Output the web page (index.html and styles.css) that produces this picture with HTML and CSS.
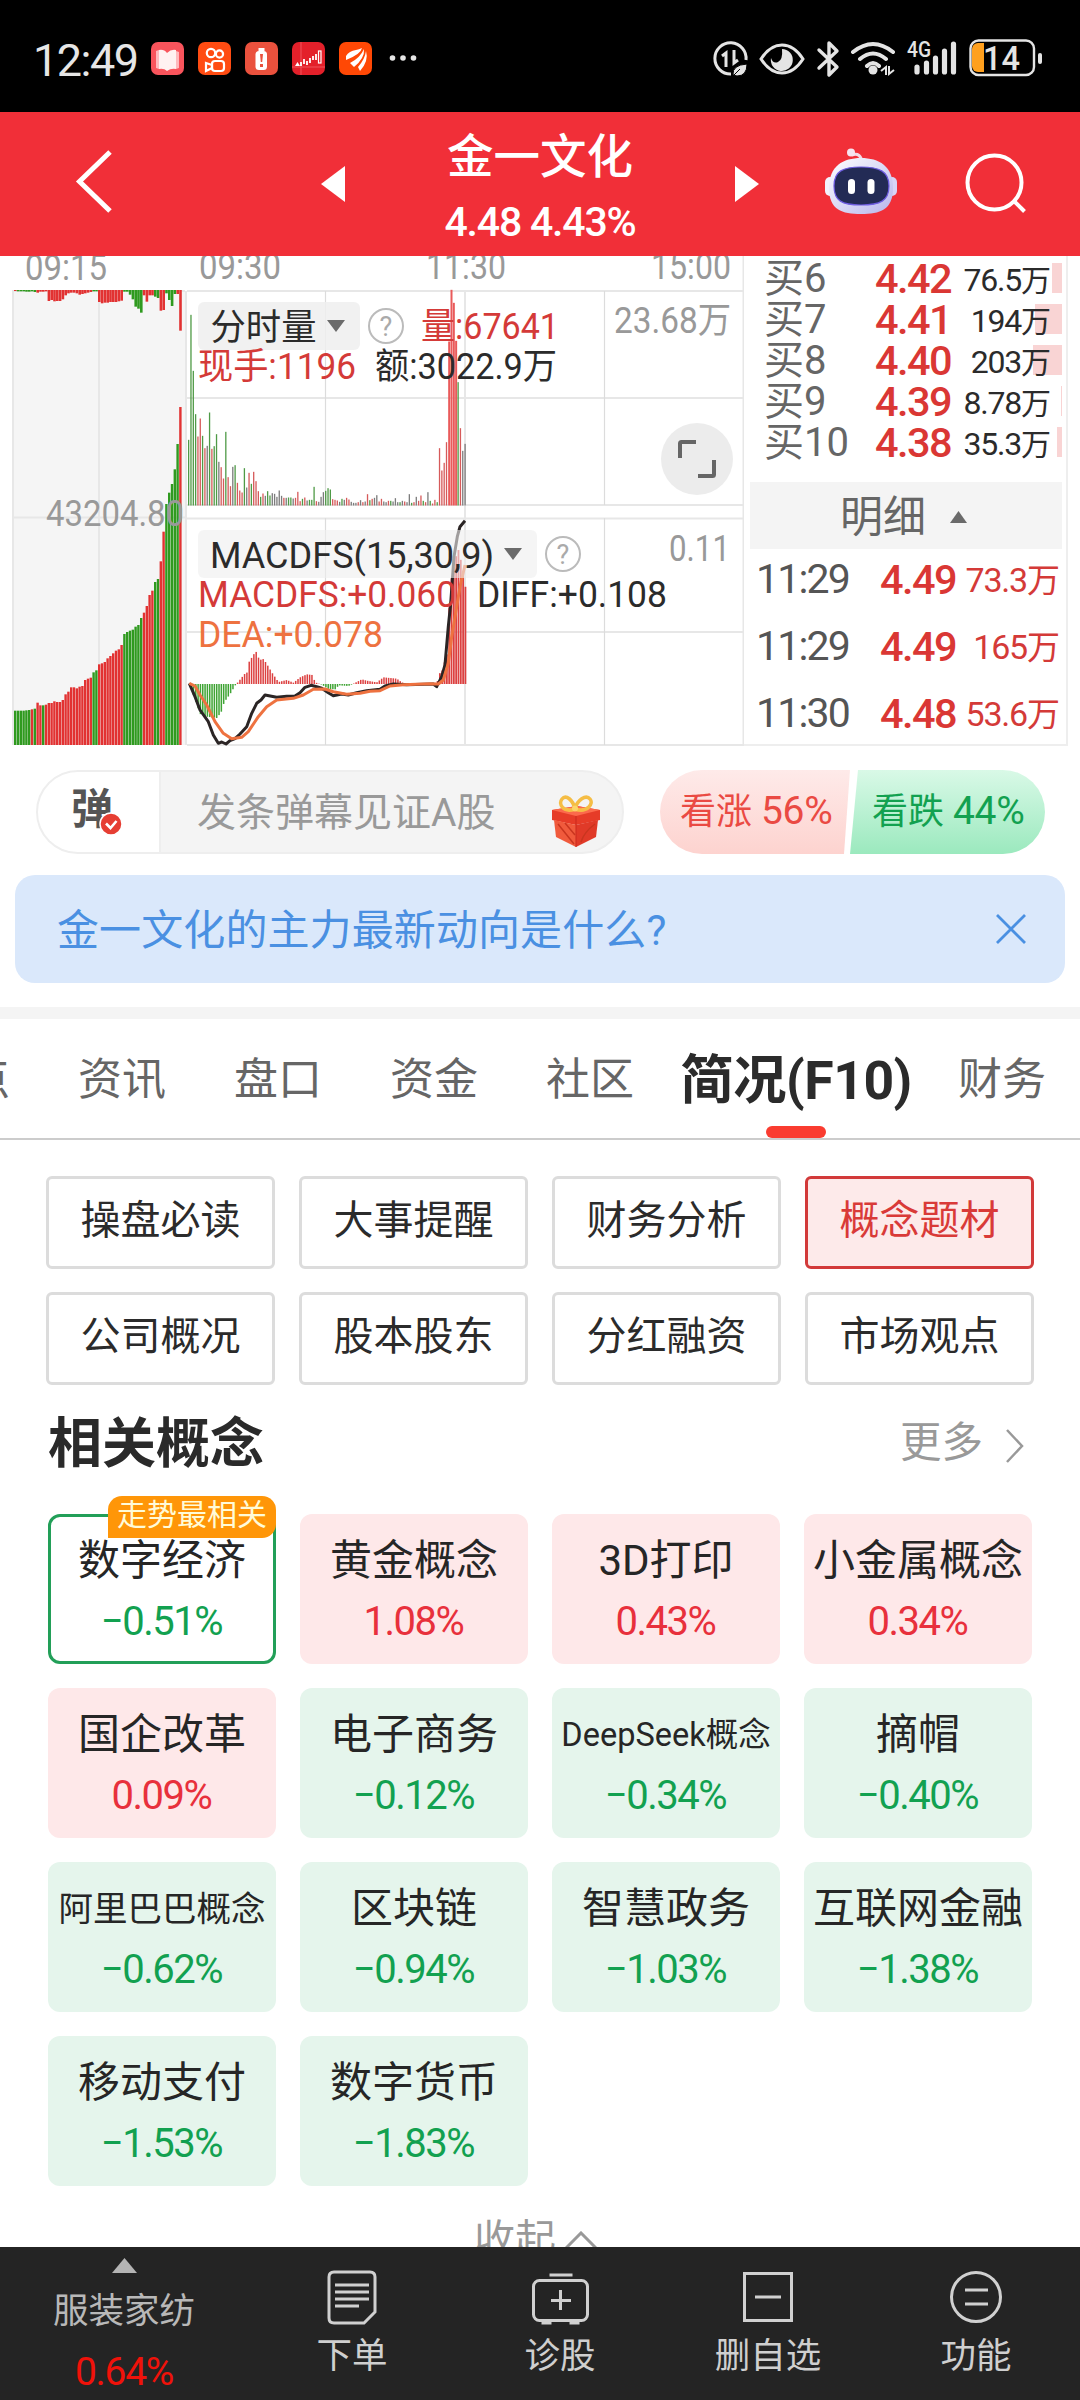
FILE: index.html
```html
<!DOCTYPE html>
<html lang="zh-CN">
<head>
<meta charset="utf-8">
<title>金一文化</title>
<link rel="stylesheet" href="styles.css">
</head>
<body>
<div class="screen">
  <div class="status">
    <span class="clock">12:49</span>
    <svg class="apps" width="270" height="34" viewBox="150 41 270 34">
      <rect x="151" y="42" width="33" height="33" rx="7" fill="#f9545c"/>
      <path d="M156 51l3-1v19l-3-1zM176 51l3 1v16l-3 1z" fill="#ffb9bd"/>
      <path d="M159 50q5-1 8 3q4-4 9-3v19q-5-1-9 2q-3-3-8-2z" fill="#fff1f1"/>
      <rect x="198" y="42" width="33" height="33" rx="7" fill="#ff4c12"/>
      <g fill="none" stroke="#fff" stroke-width="2.2"><circle cx="211" cy="53" r="4.2"/><circle cx="219.500" cy="54" r="3.600"/><rect x="212" y="61" width="12" height="10" rx="3"/><path d="M206 63l6 2v3l-6 3z"/></g>
      <rect x="245" y="42" width="33" height="33" rx="7" fill="#ea513d"/>
      <rect x="258.500" y="48" width="6" height="3" fill="#fff"/><rect x="255.500" y="51" width="11.500" height="19" rx="3.500" fill="#fff"/><path d="M260 54h3l-.8 8h-1.400zM260 64h3v3h-3z" fill="#ea513d"/>
      <rect x="292" y="42" width="33" height="33" rx="7" fill="#e3202a"/>
      <path d="M301 42v33M292 67h33" stroke="#f0525a" stroke-width="1"/>
      <path d="M295 66l2.500-4 2.500 4z" fill="#fff"/><path d="M301 62v4M304 59v5M307 61v4M310 58v5M313 56v4M316 54v6" stroke="#fff" stroke-width="1.800"/><rect x="318.500" y="51" width="2.500" height="12" fill="none" stroke="#fff" stroke-width="1.200"/>
      <rect x="339" y="42" width="33" height="33" rx="7" fill="#ff4805"/>
      <path d="M346 56q3-5 10-6 3-.5 6-2-1 6-16 12z" fill="#fff"/><path d="M350 63q10-5 14-14 1 9-10 18z" fill="#fff"/><path d="M358 67q7-8 8-16 3 10-6 20z" fill="#fff"/>
      <g fill="#e6e6e6"><circle cx="392.500" cy="58" r="2.800"/><circle cx="403" cy="58" r="2.800"/><circle cx="413.500" cy="58" r="2.800"/></g>
    </svg>
    <svg class="sys" width="334" height="40" viewBox="711 38 334 40" fill="none" stroke="#e4e4e4">
      <path d="M746 60A15.600 15.600 0 1 0 731 74" stroke-width="3"/>
      <path d="M722 56l4-3v14M734 50v13l4-3" stroke-width="3"/>
      <path d="M733 75q-1-10 14-11q0 12-10 12zM732 77l8-8" fill="#e4e4e4" stroke="#000" stroke-width="1"/>
      <path d="M761 59q9-14 21-14t21 14q-9 14-21 14t-21-14z" stroke-width="3"/>
      <path d="M782 49a11 11 0 1 1-11 9q2 6 7 4t4-13z" fill="#e4e4e4" stroke="none"/>
      <path d="M819 50l18 17-8 8V43l8 8-18 17" stroke-width="3.400" stroke-linejoin="round" stroke-linecap="round"/>
      <path d="M853 52q20-16 40 0M860 59q13-11 26 0M867 66q6-6 12 0" stroke-width="4" stroke-linecap="round"/>
      <circle cx="873" cy="70" r="4.500" fill="#e4e4e4" stroke="none"/>
      <path d="M881 71l5-4v8M889 66v8l5-4" stroke-width="2"/>
      <path d="M917 67v5M926.500 63v9M935.500 58v14M944.500 51v21M953.500 44v28" stroke-width="5.200" stroke-linecap="round"/>
      <text x="907" y="57" font-size="22" font-weight="500" fill="#e4e4e4" stroke="none" textLength="24" lengthAdjust="spacingAndGlyphs">4G</text>
      <path d="M984 43h-6a6 6 0 0 0-6 6v17a6 6 0 0 0 6 6h6z" fill="#ffa01e" stroke="none"/>
      <rect x="970.500" y="40.500" width="63.500" height="34.500" rx="8" stroke-width="2.400"/>
      <path d="M1040 55v7" stroke-width="4" stroke-linecap="round"/>
      <text x="983" y="69.500" font-size="33" font-weight="500" fill="#e4e4e4" stroke="none" textLength="37" lengthAdjust="spacingAndGlyphs">14</text>
    </svg>
  </div>

  <header class="header">
    <svg class="back" width="40" height="68" viewBox="74 147 40 68"><path d="M110 152L79.500 181.500 110 211" fill="none" stroke="#fff" stroke-width="5"/></svg>
    <svg class="prev" width="24" height="36" viewBox="0 0 24 36"><path d="M24 0v36L0 18z" fill="#fff"/></svg>
    <div class="stock"><div class="stock-name">金一文化</div><div class="stock-price">4.48 4.43%</div></div>
    <svg class="next" width="24" height="36" viewBox="0 0 24 36"><path d="M0 0v36l24-18z" fill="#fff"/></svg>
    <svg class="robot" width="74" height="70" viewBox="824 147 74 70">
      <defs><linearGradient id="shell" x1="0" y1="0" x2="1" y2="1"><stop offset="0" stop-color="#fff"/><stop offset="1" stop-color="#b7b5ec"/></linearGradient></defs>
      <path d="M852 155q9-3 10 8" fill="none" stroke="#f3dbe6" stroke-width="3"/><circle cx="851" cy="152.500" r="4" fill="#f6e4f0"/>
      <rect x="825" y="177" width="10" height="19" rx="5" fill="#f3f2fc"/><rect x="887" y="177" width="10" height="19" rx="5" fill="#d8d4f6"/>
      <path d="M829 188C829 166 843 158 861 158s32 8 32 30-13 26-32 26-32-4-32-26z" fill="url(#shell)"/>
      <path d="M834 186c0-15 9-19 27-19s28 4 28 19-9 19-28 19-27-4-27-19z" fill="#232b55" stroke="#6d5be0" stroke-width="1.200"/>
      <rect x="848" y="179" width="7" height="15" rx="3.500" fill="#fff"/><rect x="867.500" y="179" width="7" height="15" rx="3.500" fill="#fff"/>
    </svg>
    <svg class="search" width="62" height="62" viewBox="964 152 62 62" fill="none" stroke="#fff" stroke-width="4"><circle cx="994.500" cy="182.500" r="27"/><path d="M1013.500 200.500l11 11"/></svg>
  </header>

  <main class="content">
    <section class="quote">
      <svg class="chart" id="chart" width="744" height="494" viewBox="0 256 744 494">
        <rect x="12" y="290" width="173" height="455" fill="#f5f5f5"/>
        <g stroke="#e7e7e7" fill="none" stroke-width="2">
          <path d="M13 290v455M12 291h173M99 291v454M12 517.500h173M186 291v454" />
          <path d="M187 291H744M187 398H744M187 505H744M187 518.500H744M187 632H744M187 745H744M465 291v454M743.500 256V746"/>
          <path d="M325.500 291v214M325.500 518v227M604.500 291v214M604.500 518v227" stroke-width="1.200" stroke="#dcdcdc"/>
        </g>
        <g id="auction"></g>
        <g id="volume"></g>
        <g id="macd"></g>
        <polyline id="diff" fill="none" stroke="#2b2525" stroke-width="3" stroke-linejoin="round"/>
        <polyline id="dea" fill="none" stroke="#ee7240" stroke-width="3" stroke-linejoin="round"/>
        <rect x="198" y="302" width="162" height="48" rx="6" fill="#efefef" fill-opacity=".85"/>
        <rect x="198" y="530" width="339" height="48" rx="6" fill="#efefef" fill-opacity=".6"/>
        <path d="M327 320h18l-9 12zM504 548h18l-9 12z" fill="#6b6b6b"/>
        <g fill="none" stroke="#bbb" stroke-width="2"><circle cx="386" cy="326" r="17"/><circle cx="563" cy="554" r="17"/></g>
        <g font-size="27" fill="#aaa" text-anchor="middle"><text x="386" y="335.500">?</text><text x="563" y="563.500">?</text></g>
        <g class="axis">
          <text x="25" y="279.500" textLength="82">09:15</text><text x="199" y="279" textLength="82">09:30</text>
          <text x="426" y="279" textLength="80">11:30</text><text x="651" y="279" textLength="80">15:00</text>
          <text x="46" y="526" textLength="138">43204.80</text><text x="614" y="333" textLength="117">23.68万</text><text x="669" y="561" textLength="61">0.11</text>
        </g>
        <g class="ind">
          <text x="210.500" y="340" textLength="106">分时量</text>
          <text x="421" y="339" textLength="138" class="red">量:67641</text>
          <text x="198" y="379" textLength="158" class="red">现手:1196</text>
          <text x="375" y="379" textLength="182">额:3022.9万</text>
          <text x="210" y="568" textLength="284">MACDFS(15,30,9)</text>
          <text x="198" y="607" textLength="258" class="red">MACDFS:+0.060</text>
          <text x="477" y="607" textLength="190">DIFF:+0.108</text>
          <text x="198" y="647" textLength="185" class="orange">DEA:+0.078</text>
        </g>
        <circle cx="697" cy="459" r="36" fill="#ececec"/>
        <path d="M680 458v-14.500q0-1.500 1.500-1.500H696M714 460v14.500q0 1.500-1.500 1.500H698" fill="none" stroke="#666" stroke-width="4"/>
      </svg>
      <aside class="book">
        <div class="bids">
          <div class="bid"><span class="lv">买6</span><span class="px">4.42</span><span class="qty">76.5<i>万</i></span><b style="width:10px"></b></div>
          <div class="bid"><span class="lv">买7</span><span class="px">4.41</span><span class="qty">194<i>万</i></span><b style="width:27px"></b></div>
          <div class="bid"><span class="lv">买8</span><span class="px">4.40</span><span class="qty">203<i>万</i></span><b style="width:29px"></b></div>
          <div class="bid"><span class="lv">买9</span><span class="px">4.39</span><span class="qty">8.78<i>万</i></span><b style="width:1px"></b></div>
          <div class="bid"><span class="lv">买10</span><span class="px">4.38</span><span class="qty">35.3<i>万</i></span><b style="width:5px"></b></div>
        </div>
        <div class="detail">明细<svg width="17" height="12" viewBox="0 0 17 12"><path d="M0 12h17L8.500 0z" fill="#6a6a6a"/></svg></div>
        <div class="trade"><span>11:29</span><span class="px">4.49</span><span class="tq">73.3<i>万</i></span></div>
        <div class="trade"><span>11:29</span><span class="px">4.49</span><span class="tq">165<i>万</i></span></div>
        <div class="trade"><span>11:30</span><span class="px">4.48</span><span class="tq">53.6<i>万</i></span></div>
      </aside>
    </section>

    <section class="social">
      <div class="danmu">
        <div class="danmu-on">弹<svg class="tick" width="24" height="24" viewBox="0 0 24 24"><circle cx="12" cy="12" r="11" fill="#e63e33" stroke="#fff" stroke-width="1.500"/><path d="M7 11.500l4.500 4.500 6-7" fill="none" stroke="#fff" stroke-width="2.600"/></svg></div>
        <div class="danmu-input">发条弹幕见证A股</div>
        <svg class="gift" width="50" height="54" viewBox="0 0 50 54">
          <path d="M1 16l25-4 23 4v10l-24 5L1 26z" fill="#e63c28"/><path d="M1 16l24 6 24-6-23-4z" fill="#fb6a4c"/>
          <path d="M3 26l22 5v22L5 43z" fill="#f05a3c"/><path d="M25 31l22-5-2 17-20 10z" fill="#e03a28"/><path d="M25 22v31" stroke="#c9281c" stroke-width="1"/>
          <path d="M30 48q3-10 14-18M7 30l16 20M14 29l10 12" stroke="#c9351f" stroke-width="1.500" fill="none"/>
          <path d="M24 15C12 19 7 10 11 5s11 1 13 10c2-9 11-15 15-10s-3 14-15 10z" fill="none" stroke="#f5bd45" stroke-width="3.600"/><circle cx="24" cy="14.500" r="3" fill="#fbd469"/>
        </svg>
      </div>
      <div class="vote"><span class="up">看涨 <i>56%</i></span><span class="down">看跌 <i>44%</i></span></div>
    </section>

    <section class="ask"><span>金一文化的主力最新动向是什么?</span><svg width="30" height="30" viewBox="0 0 30 30"><path d="M1 1l28 28M29 1L1 29" stroke="#4a90e2" stroke-width="2.800"/></svg></section>

    <nav class="tabs">
      <span>热点</span><span>资讯</span><span>盘口</span><span>资金</span><span>社区</span><span class="on">简况(F10)</span><span>财务</span>
    </nav>

    <section class="f10">
      <span>操盘必读</span><span>大事提醒</span><span>财务分析</span><span class="on">概念题材</span>
      <span>公司概况</span><span>股本股东</span><span>分红融资</span><span>市场观点</span>
    </section>

    <div class="title"><h2>相关概念</h2><span>更多<svg width="20" height="34" viewBox="0 0 20 34"><path d="M2 1l15 16L2 33" fill="none" stroke="#999" stroke-width="2.500"/></svg></span></div>

    <section class="tiles">
      <div class="tile best down"><em>走势最相关</em><p>数字经济</p><b>−0.51%</b></div>
      <div class="tile up"><p>黄金概念</p><b>1.08%</b></div>
      <div class="tile up"><p>3D打印</p><b>0.43%</b></div>
      <div class="tile up"><p>小金属概念</p><b>0.34%</b></div>
      <div class="tile up"><p>国企改革</p><b>0.09%</b></div>
      <div class="tile down"><p>电子商务</p><b>−0.12%</b></div>
      <div class="tile down"><p class="s1">DeepSeek概念</p><b>−0.34%</b></div>
      <div class="tile down"><p>摘帽</p><b>−0.40%</b></div>
      <div class="tile down"><p class="s2">阿里巴巴概念</p><b>−0.62%</b></div>
      <div class="tile down"><p>区块链</p><b>−0.94%</b></div>
      <div class="tile down"><p>智慧政务</p><b>−1.03%</b></div>
      <div class="tile down"><p>互联网金融</p><b>−1.38%</b></div>
      <div class="tile down"><p>移动支付</p><b>−1.53%</b></div>
      <div class="tile down"><p>数字货币</p><b>−1.83%</b></div>
    </section>
    <div class="fold">收起<svg width="32" height="18" viewBox="0 0 32 18"><path d="M1 17L16 2l15 15" fill="none" stroke="#999" stroke-width="3"/></svg></div>
  </main>

  <footer class="dock">
    <div class="sector"><svg width="25" height="15" viewBox="0 0 25 15"><path d="M0 15h25L12.500 0z" fill="#b4b4b4"/></svg><span>服装家纺</span><b>0.64%</b></div>
    <div class="act a1"><svg width="58" height="56" viewBox="0 0 58 56"><path d="M11 3h36q5 0 5 5v35L41 54H11q-5 0-5-5V8q0-5 5-5zM12 16h34M12 23h34M12 30h34M12 37h24"/></svg><span>下单</span></div>
    <div class="act a2"><svg width="58" height="56" viewBox="0 0 58 56"><rect x="2.500" y="11.500" width="54" height="40" rx="6"/><path d="M18.500 6h23M29.500 21v20M20 31.500h20M10.500 54h10M38.500 54h10"/></svg><span>诊股</span></div>
    <div class="act a3"><svg width="58" height="56" viewBox="0 0 58 56"><rect x="5.500" y="4.500" width="47" height="47"/><path d="M16 28h26"/></svg><span>删自选</span></div>
    <div class="act a4"><svg width="58" height="56" viewBox="0 0 58 56"><circle cx="29" cy="28" r="24.500"/><path d="M18 21h23M18 35h23"/></svg><span>功能</span></div>
  </footer>
</div>
<script src="script.js"></script>
</body>
</html>
```
FILE: styles.css
```css
* { box-sizing: border-box; margin: 0; padding: 0; }
body { font-family: Roboto, "Noto Sans CJK SC", sans-serif; color: #2b2b2b; background: #fff; }
i, em { font-style: normal; }
.screen { width: 1080px; height: 2400px; display: flex; flex-direction: column; overflow: hidden; background: #fff; }
.screen svg { flex: none; display: block; }

.status { height: 112px; flex: none; background: #000; display: flex; align-items: flex-start; padding: 0 35px 0 33px; }
.clock { width: 117px; padding-top: 34px; font-size: 45px; line-height: 53px; color: #e6e6e6; letter-spacing: -1.500px; }
.apps { margin-top: 41px; }
.sys { margin: 38px 0 0 auto; }

.header { height: 144px; flex: none; background: #f12f38; display: flex; }
.back { margin: 35px 0 0 74px; }
.prev { margin: 54px 0 0 207px; }
.stock { width: 390px; text-align: center; color: #fff; font-weight: 500; }
.stock-name { font-size: 46.500px; line-height: 60px; padding-top: 15px; height: 77px; }
.stock-price { font-size: 41px; line-height: 48px; padding-top: 9px; letter-spacing: -1.200px; }
.next { margin-top: 54px; }
.robot { margin: 35px 0 0 65px; }
.search { margin: 40px 0 0 66px; }

.content { flex: 1; min-height: 0; overflow: hidden; }
.quote { height: 494px; display: flex; }
.chart text { font-family: Roboto, "Noto Sans CJK SC", sans-serif; }
.chart .axis text { font-size: 36px; fill: #999; }
.chart .ind text { font-size: 36px; fill: #2b2b2b; font-weight: 400; }
.chart .ind .red { fill: #d43a38; }
.chart .ind .orange { fill: #ee7240; }
.book { width: 324px; height: 490px; border-right: 2px solid #eee; border-bottom: 2px solid #eee; }
.bids { height: 226px; }
.bid { height: 41px; display: flex; align-items: center; position: relative; padding: 4px 0 0 20px; white-space: nowrap; }
.lv { width: 111px; font-size: 40px; line-height: 37px; color: #666; }
.px { font-weight: 500; font-size: 41.500px; line-height: 37px; color: #da3734; letter-spacing: -1.600px; }
.bid .px { width: 72px; }
.qty { margin-left: auto; padding-right: 15px; font-size: 32px; line-height: 34px; padding-top: 4px; color: #2b2b2b; letter-spacing: -1.200px; z-index: 1; font-weight: 400; }
.qty i { font-size: 30px; letter-spacing: 0; }
.bid b { position: absolute; right: 4px; top: 7px; height: 30px; background: #f9d4d4; }
.detail { margin: 0 4px 0 6px; height: 67px; background: #f4f4f4; display: flex; align-items: center; gap: 24px; padding-left: 90px; color: #666; font-size: 43px; line-height: 60px; padding-top: 2px; }
.trade { height: 67px; padding: 0 6px 7px 12px; display: flex; align-items: center; font-size: 41px; color: #555; letter-spacing: -1.800px; }
.trade span:first-child { width: 124px; }
.trade .px { width: 72px; }
.tq { margin-left: auto; font-size: 34px; line-height: 40px; color: #d43a38; letter-spacing: -1.200px; padding-top: 3px; white-space: nowrap; }
.tq i { font-size: 33px; letter-spacing: 0; }

.social { margin-top: 20px; height: 84px; display: flex; padding-left: 36px; }
.danmu { width: 588px; height: 84px; border: 2px solid #eee; border-radius: 42px; background: #f4f4f4; display: flex; overflow: hidden; }
.danmu-on { width: 123px; background: #fff; border-right: 2px solid #eee; font-size: 42px; line-height: 76px; font-weight: 700; color: #555; padding-left: 33px; position: relative; }
.tick { position: absolute; left: 61px; top: 40px; }
.danmu-input { width: 390px; padding-left: 36px; font-size: 39px; line-height: 82px; color: #999; white-space: nowrap; }
.gift { margin: 22px 0 0 0; }
.vote { margin-left: 36px; width: 385px; height: 84px; border-radius: 42px; overflow: hidden; display: flex; font-size: 36px; line-height: 83px; white-space: nowrap; }
.vote i { font-size: 39px; letter-spacing: -.3px; }
.vote .up { width: 190px; padding-left: 20px; color: #ea4a43; background: linear-gradient(#feeae9, #fdd3cf); clip-path: polygon(0 0, 100% 0, 184px 100%, 0 100%); margin-right: -1px; }
.vote .down { width: 196px; padding-left: 23px; color: #12a150; background: linear-gradient(#d9f9e7, #9be9be); clip-path: polygon(9px 0, 100% 0, 100% 100%, 1px 100%); }

.ask { margin: 21px 15px 0; height: 108px; border-radius: 20px; background: #dae8fb; color: #4a90e2; display: flex; align-items: center; justify-content: space-between; padding: 0 39px 0 42px; font-size: 42px; letter-spacing: .1px; }
.ask span { padding-bottom: 5px; }

.tabs { margin-top: 24px; height: 133px; border-top: 12px solid #f4f4f4; border-bottom: 2px solid #ccc; display: flex; color: #666; font-size: 44px; line-height: 123px; white-space: nowrap; }
.tabs span { width: 156px; height: 119px; flex: none; text-align: center; }
.tabs span:first-child { margin-left: -112px; }
.tabs .on { width: 256px; font-size: 53.500px; font-weight: 700; color: #2b2b2b; position: relative; letter-spacing: -.5px; }
.tabs .on::after { content: ""; position: absolute; left: 98px; bottom: 0; width: 60px; height: 12px; border-radius: 6px; background: #fa3c30; }

.f10 { margin: 36px 45px 0 46px; display: grid; grid-template-columns: repeat(4, 229px); grid-auto-rows: 93px; gap: 23px 24px; }
.f10 span { border: 3px solid #dcdcdc; border-radius: 6px; font-size: 40px; line-height: 84px; text-align: center; }
.f10 .on { color: #d93a38; border-color: #d23a3a; background: #fdeaea; }

.title { height: 129px; padding: 0 55px 0 48px; display: flex; justify-content: space-between; }
.title h2 { font-size: 54px; line-height: 120px; color: #2a2a2a; }
.title span { display: flex; gap: 22px; align-items: center; height: 116px; line-height: 60px; font-size: 41.500px; color: #999; }
.title span svg { margin-top: 5px; }

.tiles { padding-left: 48px; display: grid; grid-template-columns: repeat(4, 228px); grid-auto-rows: 150px; gap: 24px; }
.tile { border-radius: 12px; text-align: center; position: relative; white-space: nowrap; }
.tile p { font-size: 42px; line-height: 60px; margin-top: 17px; color: #262626; }
.tile p.s1 { font-size: 32.500px; }
.tile p.s2 { font-size: 34.500px; }
.tile b { display: block; font-weight: 400; font-size: 40px; line-height: 60px; letter-spacing: -1.500px; margin-top: 1px; padding-right: 1px; }
.tile.up { background: #fee8e9; color: #e8303c; }
.tile.down { background: #e5f5ec; color: #12a150; }
.tile.best { background: #fff; border: 3px solid #229f58; }
.tile.best p { margin-top: 14px; }
.tile em { position: absolute; right: -3px; top: -21px; width: 168px; height: 42px; border-radius: 14px 14px 14px 0; background: #ff9608; color: #fffbd8; font-size: 30px; line-height: 38px; }
.fold { margin-top: 16px; padding-left: 474px; display: flex; gap: 9px; align-items: flex-start; color: #999; font-size: 41px; line-height: 76px; }
.fold svg { margin-top: 29px; }

.dock { height: 153px; flex: none; background: #242424; display: flex; color: #cfcfcf; font-size: 35.500px; }
.sector { width: 248px; display: flex; flex-direction: column; align-items: center; padding-top: 11px; color: #b8b8b8; }
.sector span { line-height: 60px; margin-top: 8px; height: 60px; }
.sector b { color: #f0120a; font-weight: 400; font-size: 39px; line-height: 50px; letter-spacing: -1.300px; margin-top: 6px; }
.act { width: 208px; display: flex; flex-direction: column; align-items: center; padding-top: 22px; }
.act svg { fill: none; stroke: #d0d0d0; stroke-width: 3; }
.act span { line-height: 50px; margin-top: 6px; }
```
FILE: script.js
```js
const NS = "http://www.w3.org/2000/svg";
const COLORS = { r: "#e23232", g: "#2f9a1f", R: "#d65a5a", G: "#4f9a46", K: "#7b7b7b" };

function bar(parent, x, y, w, h, color) {
  const el = document.createElementNS(NS, "rect");
  el.setAttribute("x", x.toFixed(2));
  el.setAttribute("y", y.toFixed(2));
  el.setAttribute("width", w);
  el.setAttribute("height", h.toFixed(2));
  el.setAttribute("fill", color);
  parent.appendChild(el);
}

// Call auction: matched volume from the floor, unmatched volume from the ceiling.
const auction = document.getElementById("auction");
const matched = [103,103,103,103,104,105,107,109,127,119,119,121,126,126,131,129,129,135,152,160,173,173,170,175,177,195,199,202,218,224,242,245,249,260,267,275,283,287,300,333,339,343,346,355,360,381,397,417,450,463,489,498,551,640,723,757,783,827,903,1014];
const matchedColor = "ggggggrgrrgrrrrrrrrrrrrrrrrrggrrrrrrrrrgggggggrrrrggrrgggggr";
const unmatched = [3,4,4,4,5,5,4,6,8,5,5,4,33,30,34,33,33,28,16,10,8,8,10,14,12,10,8,6,4,4,36,40,38,38,36,36,36,34,32,5,5,14,28,50,56,68,16,35,16,16,20,24,62,60,10,30,48,12,60,122];
const unmatchedColor = "rgggggggrrrrrrrrrrrrrrrrrrrrggrrrrrrrrrgggggggrrrrggrrggggrr";
unmatched[58] = 12;
const step = 168 / matched.length;
matched.forEach((v, i) => {
  const x = 14 + i * step;
  bar(auction, x, 745 - v / 3, 2.4, v / 3, COLORS[matchedColor[i]]);
  bar(auction, x, 290, 2.6, unmatched[i] / 3, COLORS[unmatchedColor[i]]);
});

// Minute volume, one bar per minute of the morning session.
const volume = document.getElementById("volume");
const vols = [197,572,404,274,207,261,209,172,179,279,170,178,214,131,115,81,221,85,58,116,121,68,45,39,112,54,98,65,101,73,43,26,36,29,43,30,37,35,26,45,29,23,23,24,24,21,23,41,13,20,24,15,17,17,56,13,11,26,40,44,52,48,19,17,15,11,20,17,23,18,11,8,8,10,16,10,12,34,16,20,23,31,12,20,12,10,14,14,12,22,10,10,14,12,10,34,8,10,26,14,30,14,10,40,14,6,17,10,172,105,128,190,492,647,608,494,370,232,164,185];
const volColor = "GGGGRRGRKGRGGKRRGRRKGRRRGKRGRRRGRKGGKKKKKRKGGKRRRGRKGGGRKKKGGGRRRKGKRRKKKRKRKRGRKKRRKKRGKKKGKRKKGRKRRGRKGRRGRRRRRRGKGR";
vols.forEach((v, i) => {
  const hot = i >= 112 && i <= 115;
  bar(volume, 188 + i * 2.323, 505.5 - v / 3, hot ? 2 : 1.3, v / 3, hot ? "#e95a5a" : COLORS[volColor[i] || "K"]);
});

// MACD histogram is interpolated between the turning points of its envelope.
const macd = document.getElementById("macd");
const env = [[568,0],[600,-90],[620,-98],[650,-102],[663,-85],[672,-55],[690,-30],[706,-3],[713,5],[735,32],[742,35],[746,65],[767,99],[778,72],[790,75],[800,60],[815,35],[835,6],[860,12],[880,4],[900,20],[920,29],[937,27],[945,5],[965,-2],[985,-15],[1007,-16],[1015,-4],[1045,-6],[1060,1],[1085,14],[1100,10],[1130,5],[1150,20],[1190,16],[1205,5],[1225,0],[1310,0],[1316,30],[1325,38],[1340,90],[1350,300],[1370,395],[1373,408],[1380,380],[1386,350],[1392,310],[1398,278]];
for (let i = 0; i < 120; i++) {
  const x = 566 + i * 6.97;
  const k = env.findIndex(p => p[0] > x);
  if (k < 1) continue;
  const [x0, y0] = env[k - 1], [x1, y1] = env[k];
  const v = (y0 + (y1 - y0) * (x - x0) / (x1 - x0)) / 3;
  bar(macd, x / 3 - 0.6, v > 0 ? 684 - v : 684, x > 1310 ? 1.8 : 1.5, Math.abs(v), v > 0 ? "#dc4040" : "#3fa434");
}

const toPage = pts => pts.map(([x, y]) => (x / 3).toFixed(1) + "," + (250 + y / 3).toFixed(1)).join(" ");
document.getElementById("diff").setAttribute("points", toPage([[568,1300],[585,1340],[600,1380],[625,1415],[640,1455],[655,1480],[665,1476],[678,1482],[690,1472],[705,1466],[720,1452],[740,1430],[755,1390],[770,1360],[783,1350],[795,1335],[830,1342],[860,1339],[885,1338],[900,1328],[915,1312],[933,1306],[950,1310],[965,1315],[985,1328],[1000,1337],[1025,1332],[1045,1335],[1070,1328],[1100,1322],[1140,1318],[1155,1308],[1180,1302],[1220,1304],[1300,1302],[1310,1310],[1325,1280],[1335,1245],[1345,1130],[1352,1060],[1362,920],[1372,860],[1380,830],[1395,812]]));
document.getElementById("dea").setAttribute("points", toPage([[568,1300],[585,1308],[600,1335],[620,1365],[645,1415],[670,1450],[695,1466],[725,1462],[745,1445],[775,1400],[800,1370],[830,1350],[880,1345],[910,1335],[940,1318],[975,1317],[1000,1325],[1040,1333],[1080,1330],[1110,1324],[1140,1322],[1170,1308],[1210,1304],[1290,1301],[1315,1302],[1330,1290],[1345,1240],[1355,1160],[1370,1070],[1380,1010],[1395,945]]));

document.querySelectorAll("#chart text[textLength]").forEach(t => t.setAttribute("lengthAdjust", "spacingAndGlyphs"));
```
